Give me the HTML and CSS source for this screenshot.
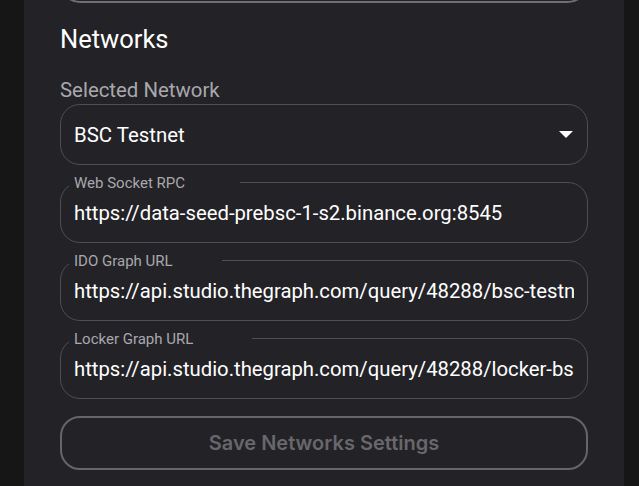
FILE: index.html
```html
<!DOCTYPE html>
<html>
<head>
<meta charset="utf-8">
<link rel="stylesheet" href="styles.css">
</head>
<body>
<div class="page">
  <section class="card">
    <div class="btn btn-prev"></div>
    <h2 class="title">Networks</h2>
    <div class="select-label">Selected Network</div>
    <div class="select">
      <span class="select-value">BSC Testnet</span>
      <svg class="arrow" width="14" height="7" viewBox="0 0 14 7"><path d="M0 0h14L7 7z" fill="#ffffff"/></svg>
    </div>
    <div class="field">
      <span class="field-label">Web Socket RPC</span>
      <div class="field-value">https://data-seed-prebsc-1-s2.binance.org:8545</div>
      <fieldset class="outline"><legend data-label="Web Socket RPC"></legend></fieldset>
    </div>
    <div class="field">
      <span class="field-label">IDO Graph URL</span>
      <div class="field-value">https://api.studio.thegraph.com/query/48288/bsc-testnet/version/latest</div>
      <fieldset class="outline"><legend data-label="IDO Graph URL"></legend></fieldset>
    </div>
    <div class="field">
      <span class="field-label">Locker Graph URL</span>
      <div class="field-value">https://api.studio.thegraph.com/query/48288/locker-bsc-testnet/version/latest</div>
      <fieldset class="outline"><legend data-label="Locker Graph URL"></legend></fieldset>
    </div>
    <button class="btn btn-save" type="button">Save Networks Settings</button>
  </section>
</div>
</body>
</html>
```

FILE: styles.css
```css
html, body {
  margin: 0;
  padding: 0;
  background: #161616;
  height: 100%;
  overflow: hidden;
}
body {
  font-family: Roboto, "Liberation Sans", sans-serif;
  color: #ffffff;
}
.page {
  display: flex;
  padding-left: 24px;
}
.card {
  width: 600px;
  box-sizing: border-box;
  background: #232227;
  padding: 0 36px 40px;
  margin-top: -51px;
  display: flex;
  flex-direction: column;
}
.btn {
  height: 54px;
  box-sizing: border-box;
  border: 2px solid #666569;
  border-radius: 20px;
  background: transparent;
  color: #68676b;
  font-family: Inter, "Open Sans", sans-serif;
  font-weight: 600;
  font-size: 20px;
  width: 100%;
  padding: 0;
}
.btn-prev {
  border-color: #707074;
}
.title {
  margin: 21px 0 0;
  font-size: 25.5px;
  line-height: 30px;
  font-weight: 400;
}
.select-label {
  margin-top: 24px;
  font-size: 20.4px;
  line-height: 24px;
  color: #a9a8ad;
}
.select {
  margin-top: 2px;
  height: 61px;
  box-sizing: border-box;
  border: 1px solid #4f4e54;
  border-radius: 20px;
  display: flex;
  align-items: center;
  justify-content: space-between;
  padding: 0 14px 0 13px;
}
.select-value {
  font-size: 20.4px;
  line-height: 24px;
}
.arrow {
  display: block;
  margin-top: -1px;
}
.field {
  position: relative;
  margin-top: 17px;
  height: 61px;
  box-sizing: border-box;
  border-radius: 20px;
  display: flex;
  align-items: center;
  padding: 0 14px;
}
.field-value {
  font-size: 20.3px;
  line-height: 24px;
  white-space: nowrap;
  overflow: hidden;
  width: 100%;
}
.field-label {
  position: absolute;
  left: 14px;
  top: -7px;
  font-size: 15px;
  line-height: 16px;
  color: #a9a8ad;
  white-space: nowrap;
}
.outline {
  position: absolute;
  top: -5px;
  left: 0;
  right: 0;
  bottom: 0;
  margin: 0;
  padding: 0 8px;
  border: 1px solid #4f4e54;
  border-radius: inherit;
  pointer-events: none;
  min-width: 0;
}
.outline legend {
  display: block;
  height: 11px;
  padding: 0;
  font-size: 21.7px;
  line-height: 11px;
  visibility: hidden;
  white-space: nowrap;
}
.outline legend::before {
  content: attr(data-label);
  padding: 0 5px;
}
.btn-save {
  margin-top: 17px;
}
```
